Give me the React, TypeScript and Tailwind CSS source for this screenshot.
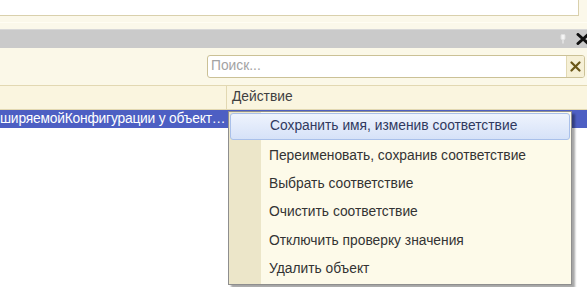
import React from 'react';

const menuItems = [
  'Сохранить имя, изменив соответствие',
  'Переименовать, сохранив соответствие',
  'Выбрать соответствие',
  'Очистить соответствие',
  'Отключить проверку значения',
  'Удалить объект',
];

export default function App() {
  return (
    <div className="relative w-[587px] h-[287px] overflow-hidden bg-white font-['Liberation_Sans',Arial,sans-serif] text-[13.8px]">
      {/* верхнее поле */}
      <div className="h-[29px] bg-[#fbf8ea]">
        <div className="h-[16px] w-[579px] bg-white border-r border-b border-[#d9d0ac]" />
        <div className="mt-[6px] h-px w-full bg-[#fffdf3]" />
      </div>

      {/* заголовок панели */}
      <div className="h-[19px] bg-[#cacaca] border-t border-[#d8d8d8] flex items-center justify-end">
        <svg width="8" height="10" viewBox="0 0 8 10" className="mr-[9px]">
          <rect x="2" y="0.5" width="4" height="5" rx="1" fill="#f4f4f4" stroke="#e0e0e0" />
          <line x1="4" y1="5.5" x2="4" y2="9.5" stroke="#f4f4f4" strokeWidth="1" />
        </svg>
        <svg width="14" height="12" viewBox="0 0 14 12" className="mr-[-3px]">
          <path d="M2 1.5 L12 10.5 M12 1.5 L2 10.5" stroke="#111" strokeWidth="3" strokeLinecap="round" />
        </svg>
      </div>

      {/* панель поиска */}
      <div className="h-[37px] bg-[#fbf8e8] flex items-center justify-end pr-[2px]">
        <div className="w-[378px] h-[23px] bg-white border border-[#cbc196] rounded-[3px] flex items-stretch overflow-hidden">
          <div className="flex-1 pl-[3px] flex items-center text-[#a3a3a3]">Поиск...</div>
          <div className="w-[18px] bg-[#f6f0d6] border-l border-[#e2d9b3] flex items-center justify-center">
            <svg width="11" height="11" viewBox="0 0 11 11">
              <path d="M1.5 1.5 L9.5 9.5 M9.5 1.5 L1.5 9.5" stroke="#6b5718" strokeWidth="2.2" strokeLinecap="round" />
            </svg>
          </div>
        </div>
      </div>

      {/* шапка таблицы */}
      <div className="h-[25px] bg-[#faf5df] border-t border-b border-[#e2d8b2] flex">
        <div className="w-[227px] border-r border-[#e2d8b2]" />
        <div className="pl-[5px] flex items-center text-[#3f3f3f]">Действие</div>
      </div>

      {/* выделенная строка */}
      <div className="h-[18px] bg-[#4d5fc3] flex items-center">
        <div className="w-[227px] whitespace-nowrap text-white tracking-[-0.2px]">
          ширяемойКонфигурации у объект…
        </div>
      </div>

      {/* контекстное меню */}
      <div className="absolute left-[228px] top-[111px] w-[344px] h-[174px] bg-[#fdfae9] border border-[#8e8e8e] shadow-[3px_3px_2px_rgba(0,0,0,0.35)]">
        <div className="absolute left-0 top-0 bottom-0 w-[32px] bg-[#ece6c9]" />
        <div className="relative flex flex-col pt-px">
          {menuItems.map((item, i) => (
            <div
              key={i}
              className={
                i === 0
                  ? 'h-[27px] mx-px mb-[2px] flex items-center pl-[39px] rounded-[3px] border border-[#a9c0ea] bg-[linear-gradient(#eef3fd,#d6e2f8)] text-[#30395f]'
                  : 'h-[28.3px] flex items-center pl-[40px] text-[#333333]'
              }
            >
              {item}
            </div>
          ))}
        </div>
      </div>
    </div>
  );
}
